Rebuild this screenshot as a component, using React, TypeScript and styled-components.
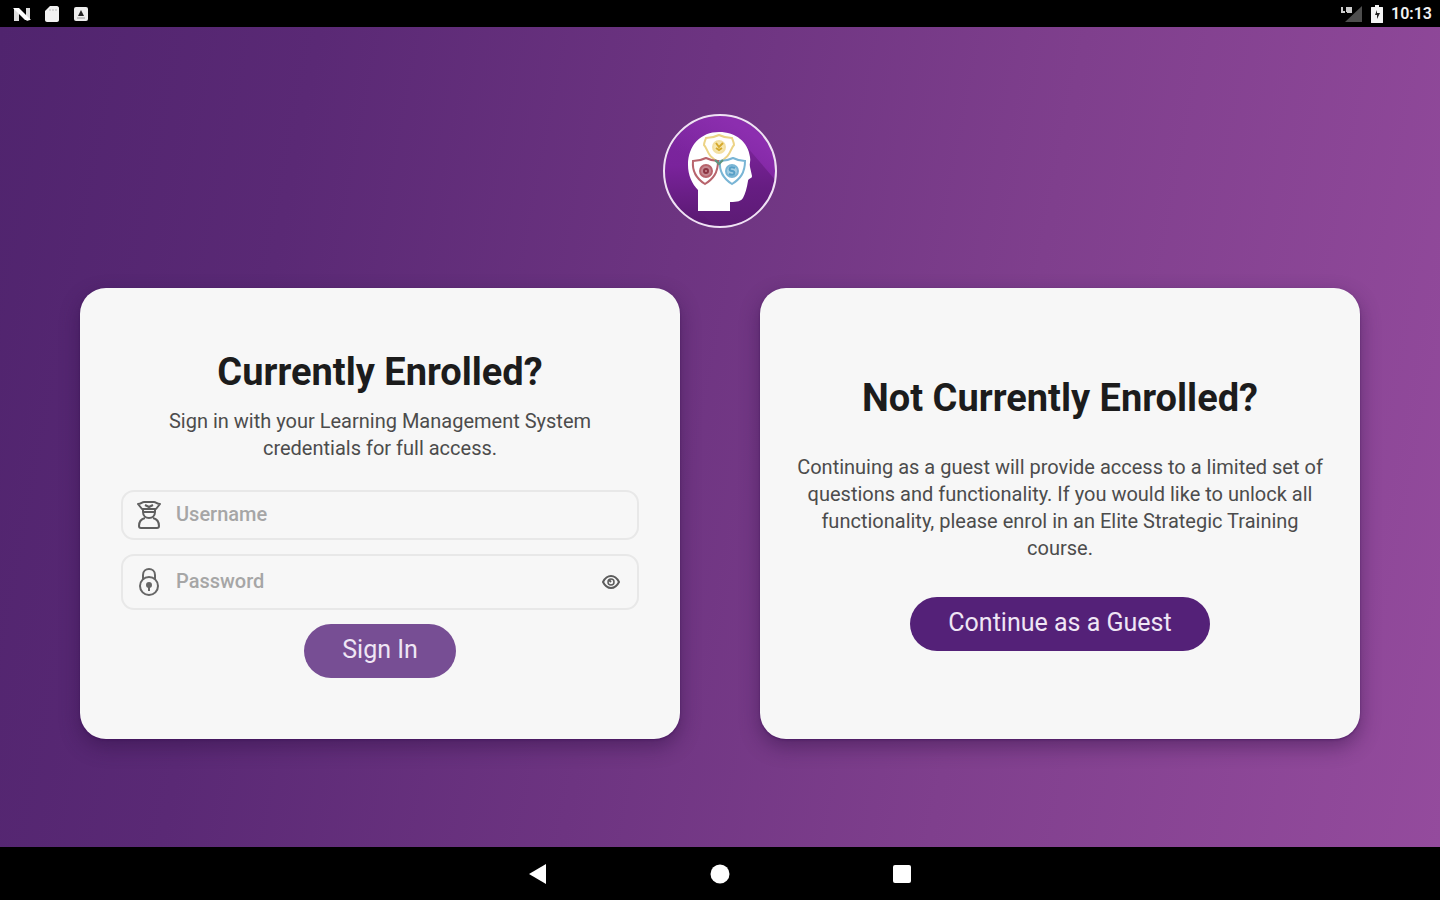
import React from 'react';
import styled, { createGlobalStyle } from 'styled-components';

const GlobalStyle = createGlobalStyle`
  *, *::before, *::after { box-sizing: border-box; }
  body { margin: 0; font-family: Roboto, "Noto Sans", sans-serif; background: #000; }
`;

const Screen = styled.div`
  min-height: 100vh;
  display: flex;
  flex-direction: column;
`;

const StatusBar = styled.header`
  height: 27px;
  flex: none;
  display: flex;
  align-items: center;
  justify-content: space-between;
  padding: 0 8px 0 12px;
  background: #000;
  color: #fff;
`;

const StatusGroup = styled.div<{ $gap: number }>`
  display: flex;
  align-items: center;
  gap: ${(p) => p.$gap}px;
`;

const Clock = styled.time`
  font-size: 16px;
  font-weight: 600;
  line-height: 28px;
  color: #f2f2f2;
`;

const Main = styled.main`
  flex: 1;
  display: flex;
  flex-direction: column;
  align-items: center;
  justify-content: center;
  gap: 60px;
  padding: 0 80px 21px;
  background: linear-gradient(101deg, #50246e 0%, #5a2975 20%, #6d3481 45%, #7f3f8d 68%, #944b9d 100%);
`;

const Cards = styled.div`
  width: 100%;
  display: grid;
  grid-template-columns: 1fr 1fr;
  gap: 80px;
`;

const Card = styled.section<{ $inset: number }>`
  min-height: 451px;
  display: flex;
  flex-direction: column;
  align-items: center;
  justify-content: center;
  padding: 59px ${(p) => p.$inset}px 61px;
  border-radius: 26px;
  background: #f7f7f7;
  box-shadow: 0 1px 2px rgba(60, 10, 90, 0.5), 0 8px 20px rgba(45, 15, 65, 0.45);
`;

const Title = styled.h1`
  margin: 0;
  font-size: 38px;
  font-weight: 700;
  line-height: 48px;
  color: #1c1c1c;
`;

const Copy = styled.p<{ $top: number; $bottom: number }>`
  margin: ${(p) => p.$top}px 0 ${(p) => p.$bottom}px;
  font-size: 20px;
  line-height: 27px;
  text-align: center;
  color: #4c4c4c;
`;

const Form = styled.form`
  width: 100%;
  display: flex;
  flex-direction: column;
  align-items: center;
  gap: 14px;
`;

const Field = styled.label<{ $height: number }>`
  width: 100%;
  height: ${(p) => p.$height}px;
  display: flex;
  align-items: center;
  gap: 15px;
  padding: 0 17px 0 14px;
  border: 2px solid #e8e8e8;
  border-radius: 13px;
`;

const TextInput = styled.input`
  flex: 1;
  min-width: 0;
  height: 30px;
  padding: 0 0 2px;
  border: 0;
  outline: 0;
  background: transparent;
  font: 500 20px Roboto, "Noto Sans", sans-serif;
  color: #333;
  &::placeholder { color: #a6a6a6; opacity: 1; }
`;

const IconButton = styled.button`
  display: flex;
  padding: 0;
  border: 0;
  background: transparent;
`;

const Pill = styled.button<{ $tone: string }>`
  height: 54px;
  padding: 0 38px 3px;
  border: 0;
  border-radius: 27px;
  background: ${(p) => p.$tone};
  color: #efe6f5;
  font: 400 25px Roboto, "Noto Sans", sans-serif;
`;

const NavBar = styled.nav`
  height: 53px;
  flex: none;
  display: flex;
  align-items: center;
  justify-content: center;
  gap: 158px;
  background: #000;
`;

const NavButton = styled(IconButton)`
  width: 24px;
  justify-content: center;
`;

const Logo = () => (
  <svg width="114" height="114" viewBox="0 0 114 114" role="img" aria-label="Elite Strategic Training">
    <defs>
      <linearGradient id="disc" x1="0" y1="0" x2="0" y2="1">
        <stop offset="0" stopColor="#7c279f" />
        <stop offset="0.45" stopColor="#7a239c" />
        <stop offset="1" stopColor="#58196f" />
      </linearGradient>
      <linearGradient id="cast" x1="0" y1="0" x2="0" y2="1">
        <stop offset="0" stopColor="#7a2399" />
        <stop offset="0.5" stopColor="#661d82" />
        <stop offset="1" stopColor="#5c1b74" />
      </linearGradient>
      <linearGradient id="glow" x1="0" y1="1" x2="1" y2="0">
        <stop offset="0.3" stopColor="#8c2eaf" stopOpacity="0" />
        <stop offset="0.75" stopColor="#8c2eaf" />
      </linearGradient>
      <clipPath id="round"><circle cx="57" cy="57" r="55" /></clipPath>
    </defs>
    <circle cx="57" cy="57" r="55" fill="url(#disc)" />
    <g clipPath="url(#round)">
      <path d="M0 0H114V72H0Z" fill="url(#glow)" />
      <path d="M84 33 114 68V114H54L35 96Z" fill="url(#cast)" />
    </g>
    <circle cx="57" cy="57" r="56" fill="none" stroke="#f0e2f5" strokeWidth="2" />
    <path d="M35 97V76C29 70 25 61 25 51 25 31 38 18 56 18c17 0 29 10 31 25 1 4-1 7 0 10l2 9c0 3-4 2-4 5-1 7-3 13-5 17-2 3-5 4-13 4V97Z" fill="#fff" />
    <g fill="none" strokeWidth="2">
      <g stroke="#ecd386">
        <path d="M43 24c5 0 9-1 13-3 4 2 8 3 13 3 1 3 2 5 2 7-4 4-3 12-15 17-12-5-11-13-15-17 0-2 1-4 2-7Z" />
        <circle cx="56" cy="33" r="6" fill="#f7e7b0" stroke="#f3dfa1" />
        <path d="m53 29 3 4 4-4M53 34l3 2 3-2" stroke="#d5a92e" />
      </g>
      <g stroke="#b8646c">
        <path d="M30 47c5 0 9-1 13-3 4 2 8 3 12 3 0 12-5 18-13 23-8-5-13-13-12-23Z" />
        <circle cx="43" cy="57" r="6" fill="#c58a92" />
        <circle cx="43" cy="57" r="2" stroke="#8c3542" />
      </g>
      <g stroke="#79b5d5">
        <path d="M57 47c5 0 9-1 13-3 4 2 8 3 12 3 0 12-5 18-13 23-8-5-13-13-12-23Z" />
        <circle cx="69" cy="57" r="6" fill="#a5cee3" />
        <path d="M72 54c-6-3-7 3-3 3s3 6-3 3" stroke="#569fc7" />
      </g>
      <path d="m52 46 4 4 4-4" stroke="#5f9580" />
    </g>
  </svg>
);

const UserIcon = () => (
  <svg width="24" height="30" viewBox="0 0 24 30" fill="none" stroke="#5f5f5f" strokeWidth="2" strokeLinejoin="round" aria-hidden="true">
    <path d="M1 4c3 0 4-2 6-2h10c2 0 3 2 6 2l-4 5H5L1 4Z" />
    <path d="M6 9v3c0 4 3 6 6 6s6-2 6-6V9M6 12h12M8 5l4 2 4-2" />
    <path d="M8 18c-4 1-6 4-6 8 0 1 1 2 2 2h16c1 0 2-1 2-2 0-4-2-7-6-8" />
  </svg>
);

const LockIcon = () => (
  <svg width="24" height="30" viewBox="0 0 24 30" fill="none" stroke="#666" strokeWidth="2" aria-hidden="true">
    <path d="M6 13V8c0-4 3-6 6-6s6 2 6 6v5" />
    <circle cx="12" cy="19" r="9" />
    <circle cx="12" cy="18" r="2" fill="#666" />
    <path d="M12 19v5" />
  </svg>
);

const EyeIcon = () => (
  <svg width="18" height="16" viewBox="0 0 18 16" fill="none" stroke="#5c5c5c" strokeWidth="2" aria-hidden="true">
    <path d="M1 8c2-4 5-6 8-6s6 2 8 6c-2 4-5 6-8 6s-6-2-8-6Z" />
    <circle cx="9" cy="8" r="3" strokeWidth="1.5" />
    <path d="m7 6 2 2" />
  </svg>
);

export default function App() {
  return (
    <>
      <GlobalStyle />
      <Screen>
        <StatusBar>
          <StatusGroup $gap={13}>
            <svg width="20" height="16" viewBox="0 0 20 16" aria-hidden="true">
              <path d="M2 15V3l3-1 9 8V2h4v12l-3 1-8-8v8Z" fill="#dedede" />
              <path d="M1 2h6l12 12h-6Z" fill="#fff" />
            </svg>
            <svg width="14" height="18" viewBox="0 0 14 18" aria-hidden="true">
              <path d="M5 1h7c1 0 2 1 2 2v12c0 1-1 2-2 2H2c-1 0-2-1-2-2V6Z" fill="#f2f2f2" />
              <path d="M5 4v2M8 4v2M11 4v2" stroke="#bbb" />
            </svg>
            <svg width="18" height="16" viewBox="0 0 18 16" aria-hidden="true">
              <rect x="2" y="1" width="14" height="14" rx="2" fill="#ededed" />
              <path d="m9 4 3 6H6Z" fill="#222" />
              <path d="M5 12h8" stroke="#999" />
            </svg>
          </StatusGroup>
          <StatusGroup $gap={8}>
            <svg width="24" height="18" viewBox="0 0 24 18" aria-hidden="true">
              <path d="M23 1v16H6Z" fill="#4d4d4d" />
              <rect x="1" y="1" width="13" height="8" fill="#000" />
              <path d="M3 2v5h3M8 2v5M11 3H8M8 5h4v2H8M12 2v5" fill="none" stroke="#ccc" strokeWidth="2" />
            </svg>
            <svg width="12" height="18" viewBox="0 0 12 18" aria-hidden="true">
              <path d="M4 0h4v2h3c1 0 1 0 1 1v14c0 1 0 1-1 1H1c-1 0-1 0-1-1V3c0-1 0-1 1-1h3Z" fill="#f5f5f5" />
              <path d="M6 5 4 10h2v4l3-6H6Z" fill="#222" />
            </svg>
            <Clock>10:13</Clock>
          </StatusGroup>
        </StatusBar>

        <Main>
          <Logo />
          <Cards>
            <Card $inset={41}>
              <Title>Currently Enrolled?</Title>
              <Copy $top={12} $bottom={28}>
                Sign in with your Learning Management System credentials for full access.
              </Copy>
              <Form onSubmit={(e) => e.preventDefault()}>
                <Field $height={50}>
                  <UserIcon />
                  <TextInput type="text" placeholder="Username" aria-label="Username" />
                </Field>
                <Field $height={56}>
                  <LockIcon />
                  <TextInput type="password" placeholder="Password" aria-label="Password" />
                  <IconButton type="button" aria-label="Show password"><EyeIcon /></IconButton>
                </Field>
                <Pill type="submit" $tone="#774e94">Sign In</Pill>
              </Form>
            </Card>
            <Card $inset={32}>
              <Title>Not Currently Enrolled?</Title>
              <Copy $top={32} $bottom={35}>
                Continuing as a guest will provide access to a limited set of questions and
                functionality. If you would like to unlock all functionality, please enrol in an
                Elite Strategic Training course.
              </Copy>
              <Pill type="button" $tone="#542178">Continue as a Guest</Pill>
            </Card>
          </Cards>
        </Main>

        <NavBar>
          <NavButton type="button" aria-label="Back">
            <svg width="20" height="20" viewBox="0 0 20 20" aria-hidden="true"><path d="M18 0v20L1 10Z" fill="#fff" /></svg>
          </NavButton>
          <NavButton type="button" aria-label="Home">
            <svg width="20" height="20" viewBox="0 0 20 20" aria-hidden="true"><circle cx="10" cy="10" r="9.5" fill="#fff" /></svg>
          </NavButton>
          <NavButton type="button" aria-label="Overview">
            <svg width="20" height="20" viewBox="0 0 20 20" aria-hidden="true"><rect x="1" y="1" width="18" height="18" rx="2" fill="#fff" /></svg>
          </NavButton>
        </NavBar>
      </Screen>
    </>
  );
}
